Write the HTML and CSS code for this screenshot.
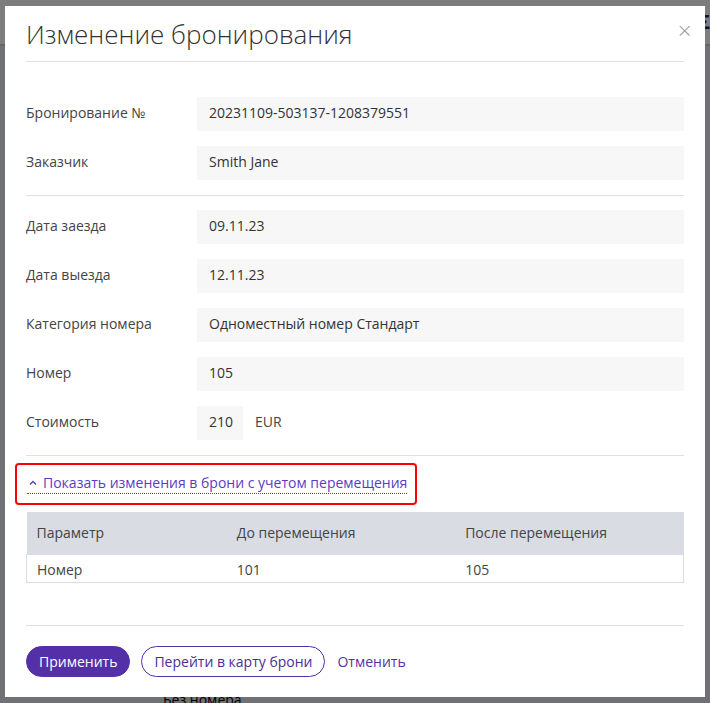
FILE: index.html
```html
<!DOCTYPE html>
<html lang="ru">
<head>
<meta charset="UTF-8">
<meta name="viewport" content="width=device-width, initial-scale=1.0">
<title>Изменение бронирования</title>
<link rel="stylesheet" href="styles.css">
</head>
<body>

<div class="page">
    <div class="page-top"><span class="page-sigma">Σ</span></div>
    <div class="page-grid">
        <div class="page-cell-name">Без номера</div>
    </div>
</div>

<div class="overlay">
    <div class="modal">
        <button class="close" type="button">&times;</button>
        <h2 class="modal-title">Изменение бронирования</h2>

        <div class="section">
            <div class="row">
                <div class="label">Бронирование №</div>
                <div class="value">20231109-503137-1208379551</div>
            </div>
            <div class="row">
                <div class="label">Заказчик</div>
                <div class="value">Smith Jane</div>
            </div>
        </div>

        <div class="section">
            <div class="row">
                <div class="label">Дата заезда</div>
                <div class="value">09.11.23</div>
            </div>
            <div class="row">
                <div class="label">Дата выезда</div>
                <div class="value">12.11.23</div>
            </div>
            <div class="row">
                <div class="label">Категория номера</div>
                <div class="value">Одноместный номер Стандарт</div>
            </div>
            <div class="row">
                <div class="label">Номер</div>
                <div class="value">105</div>
            </div>
            <div class="row">
                <div class="label">Стоимость</div>
                <div class="value value-short">210</div>
                <div class="currency">EUR</div>
            </div>
        </div>

        <div class="changes">
            <div class="highlight">
                <a class="toggle" href="#">
                    <svg class="chevron" width="8" height="6" viewBox="0 0 8 6"><path d="M1 4.5 L4 1.5 L7 4.5" fill="none" stroke="#5a3dbf" stroke-width="1.4"/></svg>
                    <span>Показать изменения в брони с учетом перемещения</span>
                </a>
            </div>
            <table class="changes-table">
                <thead>
                    <tr>
                        <th class="col-param">Параметр</th>
                        <th>До перемещения</th>
                        <th>После перемещения</th>
                    </tr>
                </thead>
                <tbody>
                    <tr>
                        <td>Номер</td>
                        <td>101</td>
                        <td>105</td>
                    </tr>
                </tbody>
            </table>
        </div>

        <div class="footer">
            <button class="btn btn-primary" type="button">Применить</button>
            <button class="btn btn-outline" type="button">Перейти в карту брони</button>
            <a class="btn-link" href="#">Отменить</a>
        </div>
    </div>
</div>

</body>
</html>
```

FILE: styles.css
```css
* {
    box-sizing: border-box;
}
body {
    margin: 0;
    font-family: "Open Sans", Arial, sans-serif;
    font-size: 14px;
    color: #333;
    background-color: #dfe2e8;
}
.page-top {
    height: 46px;
    background-color: #fafafa;
    border-bottom: 2px solid #c8ccd4;
    text-align: right;
    padding: 8px 0;
}
.page-sigma {
    color: #2a1a70;
    font-size: 20px;
    font-weight: bold;
}
.page-grid {
    height: 660px;
    position: relative;
}
.page-cell-name {
    position: absolute;
    left: 163px;
    top: 644px;
    color: #000;
}

/* Overlay & modal */
.overlay {
    position: fixed;
    top: 0;
    left: 0;
    right: 0;
    bottom: 0;
    background-color: rgba(0, 0, 0, 0.5);
}
.modal {
    position: absolute;
    top: 6px;
    left: 5px;
    width: 700px;
    height: 691px;
    background-color: white;
    padding: 0 21px;
}
.close {
    position: absolute;
    top: 14px;
    right: 12px;
    border: none;
    background: none;
    color: #9a9a9a;
    font-size: 20px;
    font-weight: 300;
    line-height: 1;
    padding: 0;
    font-family: "DejaVu Sans", sans-serif;
}
.modal-title {
    margin: 0;
    padding: 12px 0 11px;
    font-size: 26px;
    font-weight: 300;
    line-height: 32px;
    color: #333;
    border-bottom: 1px solid #e0e0e0;
}

.section {
    padding: 14px 0 0;
    border-bottom: 1px solid #e0e0e0;
}
.section:first-of-type {
    padding-top: 35px;
}
.row {
    display: flex;
    align-items: center;
    margin-bottom: 15px;
}
.label {
    width: 171px;
    flex-shrink: 0;
    color: #444;
    margin-top: -4px;
}
.value {
    flex: 1;
    height: 34px;
    line-height: 31px;
    padding: 0 12px;
    background-color: #f7f7f7;
    color: #333;
}
.value-short {
    flex: none;
    width: 46px;
}
.currency {
    margin-left: 12px;
    color: #444;
    margin-top: -4px;
}

/* Changes block */
.changes {
    padding-top: 7px;
}
.highlight {
    margin-left: -11px;
    width: 402px;
    height: 42px;
    border: 2px solid #ff0000;
    border-radius: 4px;
    padding: 6px 0 0 10px;
}
.toggle {
    display: inline-flex;
    align-items: center;
    gap: 6px;
    color: #5a3dbf;
    text-decoration: none;
    border-bottom: 1px dotted #5a3dbf;
    line-height: 20px;
}
.chevron {
    margin-left: 2px;
}
.changes-table {
    width: 100%;
    margin-top: 7px;
    border-collapse: collapse;
}
.changes-table th {
    background-color: #d9dce3;
    font-weight: normal;
    text-align: left;
    height: 42px;
    padding: 0 10px;
    color: #444;
    width: 229px;
}
.changes-table th.col-param {
    width: 201px;
}
.changes-table td {
    height: 28px;
    padding: 2px 10px 0;
    border-top: 1px solid #d9dce3;
    border-bottom: 1px solid #d9dce3;
    color: #444;
}
.changes-table td:first-child {
    border-left: 1px solid #d9dce3;
}
.changes-table td:last-child {
    border-right: 1px solid #d9dce3;
}

/* Footer */
.footer {
    margin-top: 42px;
    border-top: 1px solid #e0e0e0;
    padding-top: 20px;
    display: flex;
    align-items: center;
    gap: 11px;
}
.btn {
    font-family: "Open Sans", Arial, sans-serif;
    font-size: 14px;
    height: 31px;
    border-radius: 16px;
    padding: 0 12px;
    cursor: pointer;
}
.btn-primary {
    background-color: #5430a8;
    border: 1px solid #5430a8;
    color: white;
}
.btn-outline {
    background-color: white;
    border: 1px solid #5430a8;
    color: #4a2e96;
}
.btn-link {
    color: #5430a8;
    text-decoration: none;
    margin-left: 1px;
}
```
